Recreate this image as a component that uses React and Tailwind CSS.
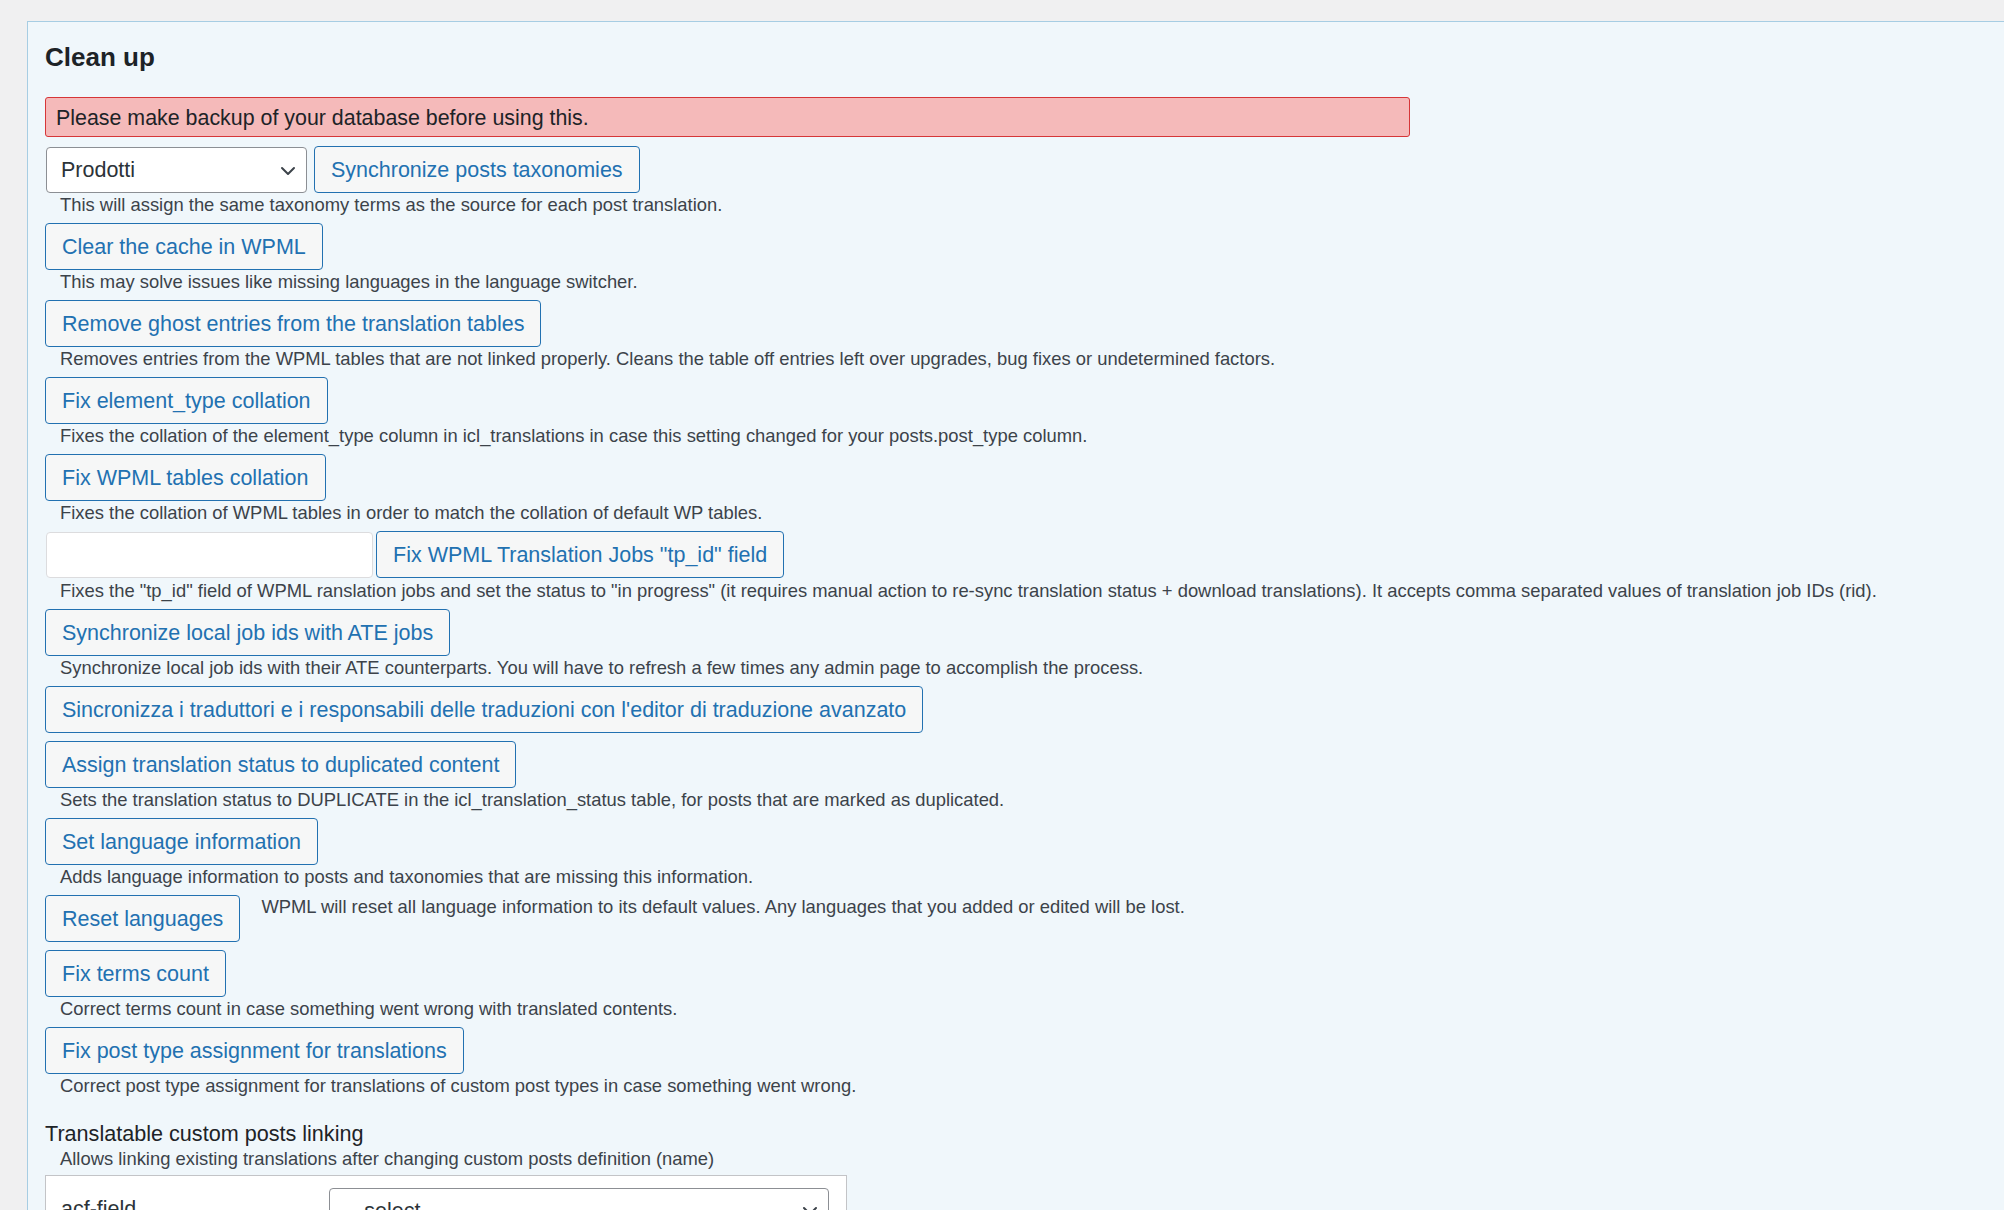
import React from 'react';

const rows = [
  { label: 'Clear the cache in WPML', desc: 'This may solve issues like missing languages in the language switcher.' },
  { label: 'Remove ghost entries from the translation tables', desc: 'Removes entries from the WPML tables that are not linked properly. Cleans the table off entries left over upgrades, bug fixes or undetermined factors.' },
  { label: 'Fix element_type collation', desc: 'Fixes the collation of the element_type column in icl_translations in case this setting changed for your posts.post_type column.' },
  { label: 'Fix WPML tables collation', desc: 'Fixes the collation of WPML tables in order to match the collation of default WP tables.' },
];

const rowsAfter = [
  { label: 'Synchronize local job ids with ATE jobs', desc: 'Synchronize local job ids with their ATE counterparts. You will have to refresh a few times any admin page to accomplish the process.' },
  { label: "Sincronizza i traduttori e i responsabili delle traduzioni con l'editor di traduzione avanzato" },
  { label: 'Assign translation status to duplicated content', desc: 'Sets the translation status to DUPLICATE in the icl_translation_status table, for posts that are marked as duplicated.' },
  { label: 'Set language information', desc: 'Adds language information to posts and taxonomies that are missing this information.' },
];

const rowsEnd = [
  { label: 'Fix terms count', desc: 'Correct terms count in case something went wrong with translated contents.' },
  { label: 'Fix post type assignment for translations', desc: 'Correct post type assignment for translations of custom post types in case something went wrong.' },
];

function Chevron() {
  return (
    <svg width="16" height="10" viewBox="0 0 16 10" fill="none">
      <path d="M2 2l6 6 6-6" stroke="#3c434a" strokeWidth="2" strokeLinecap="round" strokeLinejoin="round" />
    </svg>
  );
}

function Btn({ children }) {
  return (
    <button className="h-[47px] px-[16px] pt-[2px] border border-[#2271b1] rounded-[4px] bg-[#f6f7f7] text-[#2271b1] text-[21.5px] leading-none whitespace-nowrap">
      {children}
    </button>
  );
}

function Desc({ children }) {
  return <p className="ml-[15px] h-[22px] pt-[1px] text-[18.4px] leading-[22px] text-[#3c434a] whitespace-nowrap">{children}</p>;
}

function Row({ label, desc }) {
  return (
    <div className="flex flex-col items-start">
      <Btn>{label}</Btn>
      {desc && <Desc>{desc}</Desc>}
    </div>
  );
}

export default function App() {
  return (
    <div className="h-[1210px] overflow-hidden bg-[#f0f0f1] pt-[21px] pl-[27px]" style={{ fontFamily: '"Liberation Sans", Arial, sans-serif' }}>
      <div className="w-[2100px] h-[1300px] border border-[#a7cde3] bg-[#f0f7fb] pl-[17px] pt-[18px]">
        <h3 className="pt-[1px] text-[26px] leading-[32px] font-bold text-[#1d2327]">Clean up</h3>

        <div className="mt-[24px] w-[1365px] h-[40px] flex items-center pl-[10px] pt-[2px] bg-[#f5baba] border border-[#d63638] rounded-[3px] text-[21.4px] text-[#1d2327]">
          Please make backup of your database before using this.
        </div>

        <div className="mt-[9px] flex flex-col gap-[8px]">
          <div className="flex flex-col items-start">
            <div className="flex items-center gap-[7px]">
              <div className="ml-[1px] w-[261px] h-[46px] flex items-center justify-between pl-[14px] pr-[10px] pt-[2px] bg-white border border-[#8c8f94] rounded-[4px] text-[21.5px] text-[#2c3338]">
                <span>Prodotti</span>
                <Chevron />
              </div>
              <Btn>Synchronize posts taxonomies</Btn>
            </div>
            <Desc>This will assign the same taxonomy terms as the source for each post translation.</Desc>
          </div>

          {rows.map((r) => (
            <Row key={r.label} {...r} />
          ))}

          <div className="flex flex-col items-start">
            <div className="flex items-start gap-[3px]">
              <input className="ml-[1px] mt-[1px] w-[327px] h-[46px] bg-white border border-[#dcdcde] rounded-[4px]" />
              <Btn>Fix WPML Translation Jobs "tp_id" field</Btn>
            </div>
            <p className="mt-[1px] ml-[15px] h-[22px] pt-[1px] text-[18.4px] leading-[22px] text-[#3c434a] whitespace-nowrap">
              Fixes the "tp_id" field of WPML ranslation jobs and set the status to "in progress" (it requires manual action to re-sync translation status + download translations). It accepts comma separated values of translation job IDs (rid).
            </p>
          </div>

          {rowsAfter.map((r) => (
            <Row key={r.label} {...r} />
          ))}

          <div className="flex items-start gap-[21px]">
            <Btn>Reset languages</Btn>
            <span className="pt-[1px] text-[18.4px] leading-[22px] text-[#3c434a] whitespace-nowrap">
              WPML will reset all language information to its default values. Any languages that you added or edited will be lost.
            </span>
          </div>

          {rowsEnd.map((r) => (
            <Row key={r.label} {...r} />
          ))}
        </div>

        <h4 className="mt-[25px] text-[21.6px] leading-[26px] text-[#1d2327]">Translatable custom posts linking</h4>
        <Desc>Allows linking existing translations after changing custom posts definition (name)</Desc>

        <div className="mt-[6px] w-[802px] h-[120px] bg-white border border-[#c3c4c7] flex items-start pt-[12px] pl-[15px]">
          <span className="w-[268px] mt-[8px] text-[21.5px] leading-[26px] text-[#2c3338]">acf-field</span>
          <div className="w-[500px] h-[46px] flex items-center justify-between pl-[14px] pr-[10px] bg-white border border-[#8c8f94] rounded-[4px] text-[21.5px] text-[#2c3338]">
            <span>-- select --</span>
            <Chevron />
          </div>
        </div>
      </div>
    </div>
  );
}
